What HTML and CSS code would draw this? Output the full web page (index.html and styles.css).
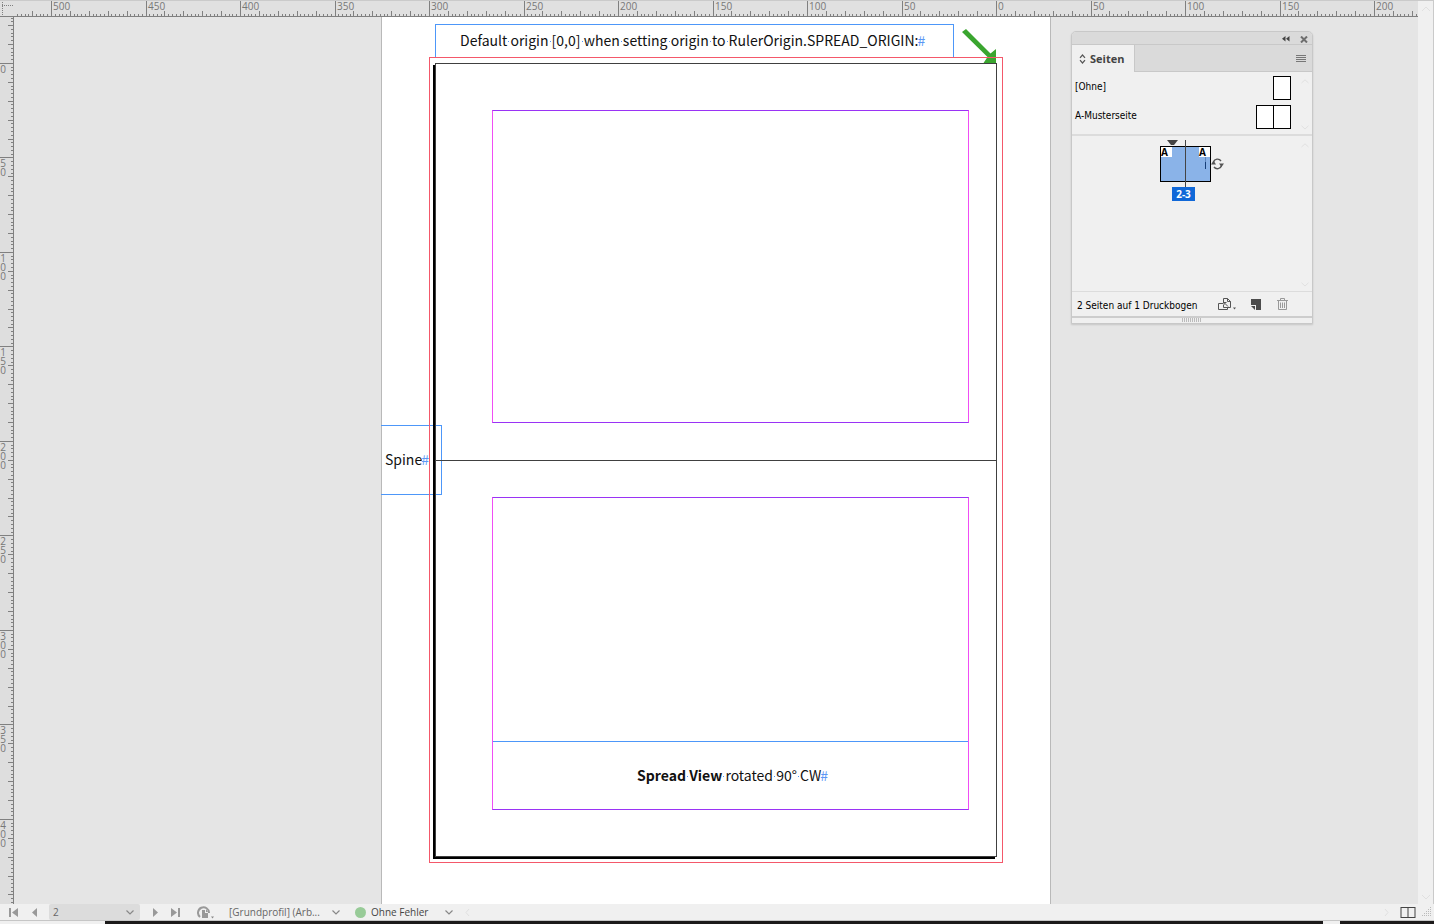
FILE: index.html
```html
<!DOCTYPE html>
<html lang="de">
<head>
<meta charset="utf-8">
<title>Seiten</title>
<link rel="stylesheet" href="styles.css">
</head>
<body>
<div class="app">
  <div class="ruler-corner">
    <svg width="13" height="16" viewBox="0 0 13 16" shape-rendering="crispEdges"><path d="M2.500 2V16M2 5.500H13" stroke="#808080" stroke-dasharray="1 1" fill="none"/></svg>
  </div>
  <div class="ruler ruler-top" id="ruler-top"></div>
  <div class="ruler ruler-left" id="ruler-left"></div>

  <main class="canvas">
    <div class="pasteboard"></div>
    <div class="text-frame frame-title">
      <p class="story">Default<span class="sp"> </span>origin<span class="sp"> </span>[0,0]<span class="sp"> </span>when<span class="sp"> </span>setting<span class="sp"> </span>origin<span class="sp"> </span>to<span class="sp"> </span>RulerOrigin.SPREAD_ORIGIN:<span class="end">#</span></p>
    </div>
    <div class="text-frame frame-spine">
      <p class="story">Spine<span class="end">#</span></p>
    </div>
    <svg class="arrow" width="36" height="36" viewBox="0 0 36 36"><path d="M4 0L28.500 24.500L34 20V34H21.500L25.500 28L0 3Z" fill="#3aa52f"/></svg>
    <div class="bleed"></div>
    <div class="spread">
      <section class="page">
        <div class="margins"></div>
      </section>
      <section class="page">
        <div class="margins">
          <div class="frame-caption">
            <p class="story"><b>Spread<span class="sp"> </span>View</b><span class="sp"> </span>rotated<span class="sp"> </span>90°<span class="sp"> </span>CW<span class="end">#</span></p>
          </div>
        </div>
      </section>
    </div>

    <aside class="panel" aria-label="Seiten">
      <header class="panel-title">
        <button class="icon-btn" aria-label="Minimieren"><svg width="8" height="6" viewBox="0 0 8 6"><path d="M3.500 0V5.500L0 2.800ZM7.500 0V5.500L4 2.800Z" fill="#444"/></svg></button>
        <button class="icon-btn" aria-label="Schließen"><svg width="8" height="7" viewBox="0 0 8 7"><path d="M1 .5L7 6.500M7 .5L1 6.500" stroke="#6e6e6e" stroke-width="2"/></svg></button>
      </header>
      <div class="tabs">
        <button class="tab"><svg width="7" height="10" viewBox="0 0 7 10"><path d="M1 3.800L3.500 1L6 3.800M1 6.200L3.500 9L6 6.200" fill="none" stroke="#555" stroke-width="1.200"/></svg>Seiten</button>
        <button class="icon-btn" aria-label="Menü"><svg width="10" height="8" viewBox="0 0 10 8" shape-rendering="crispEdges"><path d="M0 .5H10M0 2.500H10M0 4.500H10M0 6.500H10" stroke="#777"/></svg></button>
      </div>
      <div class="masters">
        <div class="master"><span class="master-name">[Ohne]</span><span class="sheets"><i></i></span></div>
        <div class="master"><span class="master-name">A-Musterseite</span><span class="sheets"><i></i><i></i></span></div>
        <svg class="hint hint-top" width="8" height="5" viewBox="0 0 8 5"><path d="M.5 4L4 .8L7.500 4"/></svg>
        <svg class="hint hint-bottom" width="8" height="5" viewBox="0 0 8 5"><path d="M.5 .8L4 4L7.500 .8"/></svg>
      </div>
      <div class="pages">
        <button class="thumb" aria-label="Druckbogen 2-3">
          <span class="half">A</span><span class="half right">A</span>
          <svg class="thumb-marks" width="66" height="48" viewBox="0 0 66 48">
            <path d="M7 0H18L14 5H11Z" fill="#444"/>
            <path d="M25.500 0V47" stroke="#444" shape-rendering="crispEdges"/>
            <path d="M45.500 17V29" stroke="#5d86bd" shape-rendering="crispEdges"/><path d="M45.500 22V29" stroke="#173f78" shape-rendering="crispEdges"/>
            <path d="M53.500 22A4.200 4.200 0 0 1 61 21M61.500 25.500A4.200 4.200 0 0 1 54 27" fill="none" stroke="#555" stroke-width="1.400"/>
            <path d="M51 24.500L53.500 20.500L56 24.500ZM59 23.500H64L61.500 27Z" fill="#555"/>
          </svg>
        </button>
        <span class="badge">2-3</span>
        <svg class="hint hint-top" width="8" height="5" viewBox="0 0 8 5"><path d="M.5 4L4 .8L7.500 4"/></svg>
        <svg class="hint hint-bottom" width="8" height="5" viewBox="0 0 8 5"><path d="M.5 .8L4 4L7.500 .8"/></svg>
      </div>
      <footer class="panel-foot">
        <span class="count">2 Seiten auf 1 Druckbogen</span>
        <button class="icon-btn" aria-label="Seitenformat bearbeiten"><svg width="19" height="12" viewBox="0 0 19 12"><path d="M5 5.500H.5V11.500H9.500V9.500M5.500 5V.5H9.500L12.500 3.500V9.500H5.500V7M9.500 .5V3.500H12.500M6 4.500L10 8.500M6 7V4.500H8.500" fill="none" stroke="#555"/><path d="M15 9.500H18L16.500 11.500Z" fill="#555"/></svg></button>
        <button class="icon-btn" aria-label="Neue Seite"><svg width="12" height="11" viewBox="0 0 12 11"><path d="M0 0H10V11H5V6H0Z" fill="#4c4c4c"/><path d="M0 7H4V11Z" fill="#4c4c4c"/></svg></button>
        <button class="icon-btn" aria-label="Löschen"><svg width="11" height="12" viewBox="0 0 11 12"><path d="M0 2.500H11M3.500 2V.5H7.500V2M1.500 3V11.500H9.500V3M3.500 4.500V10M5.500 4.500V10M7.500 4.500V10" fill="none" stroke="#999"/></svg></button>
      </footer>
      <div class="panel-grip"></div>
    </aside>
  </main>

  <div class="scrollbar">
    <svg class="faint" width="10" height="6" viewBox="0 0 10 6"><path d="M1 5L5 1L9 5"/></svg>
    <svg class="faint" width="10" height="6" viewBox="0 0 10 6"><path d="M1 1L5 5L9 1"/></svg>
  </div>

  <footer class="status">
    <button class="icon-btn first" aria-label="Erste Seite"><svg width="10" height="9" viewBox="0 0 10 9"><path d="M0 0H2V9H0ZM9 0V9L3 4.500Z" fill="#999"/></svg></button>
    <button class="icon-btn prev" aria-label="Vorherige Seite"><svg width="6" height="9" viewBox="0 0 6 9"><path d="M5 0V9L0 4.500Z" fill="#999"/></svg></button>
    <label class="drop drop-page"><select aria-label="Seite"><option>2</option></select><svg width="8" height="5" viewBox="0 0 8 5"><path d="M.5 .5L4 4L7.500 .5"/></svg></label>
    <button class="icon-btn next" aria-label="Nächste Seite"><svg width="6" height="9" viewBox="0 0 6 9"><path d="M1 0V9L6 4.500Z" fill="#999"/></svg></button>
    <button class="icon-btn last" aria-label="Letzte Seite"><svg width="10" height="9" viewBox="0 0 10 9"><path d="M7 0H9V9H7ZM0 0V9L6 4.500Z" fill="#999"/></svg></button>
    <button class="icon-btn open" aria-label="Öffnen"><svg width="17" height="13" viewBox="0 0 17 13"><path d="M3 11A5.500 5.500 0 1 1 12 7" fill="none" stroke="#999" stroke-width="2"/><path d="M5 4H8V7H11V12H5Z" fill="#999"/><path d="M9 3L11 6H9Z" fill="#999"/><path d="M14 10.500H17L15.500 12.500Z" fill="#888"/></svg></button>
    <label class="drop drop-profile"><select aria-label="Profil"><option>[Grundprofil] (Arb...</option></select><svg width="8" height="5" viewBox="0 0 8 5"><path d="M.5 .5L4 4L7.500 .5"/></svg></label>
    <span class="dot"></span>
    <label class="drop drop-errors"><select aria-label="Preflight"><option>Ohne Fehler</option></select><svg width="8" height="5" viewBox="0 0 8 5"><path d="M.5 .5L4 4L7.500 .5"/></svg></label>
    <svg class="faint" width="5" height="9" viewBox="0 0 5 9"><path d="M4 1L1 4.500L4 8"/></svg>
    <span class="spacer"></span>
    <svg class="faint" width="5" height="9" viewBox="0 0 5 9"><path d="M1 1L4 4.500L1 8"/></svg>
    <button class="icon-btn split" aria-label="Layoutansicht teilen"><svg width="16" height="11" viewBox="0 0 16 11" shape-rendering="crispEdges"><path d="M1 0V11M15 0V11M8 0V11" stroke="#999" stroke-width="2"/><path d="M1 .5H15M1 10.500H15" stroke="#444"/></svg></button>
    <svg class="size-grip" width="10" height="10" viewBox="0 0 10 10" shape-rendering="crispEdges"><path d="M8.500 0V10M6.500 2V10M4.500 4V10M2.500 6V10M.5 8V10" stroke="#bbb" stroke-dasharray="1 1"/></svg>
  </footer>
  <div class="taskbar"></div>
</div>
<script src="rulers.js"></script>
</body>
</html>
```
FILE: styles.css
```css
* { box-sizing: border-box; }

body {
  margin: 0;
  font-family: "Open Sans", "Noto Sans", sans-serif;
  font-size: 10px;
  color: #111;
}

button, select {
  margin: 0;
  padding: 0;
  border: 0;
  background: none;
  font: inherit;
  color: inherit;
}

svg { display: block; flex: none; }

.app {
  display: grid;
  grid-template: 17px minmax(0, 1fr) 17px 3px / 14px minmax(0, 1fr) 16px;
  height: 100vh;
  overflow: hidden;
}

/* Rulers */
.ruler-corner, .ruler-top { border-bottom: 1px solid #808080; background: #e0e0e0; box-shadow: inset 0 1px #cacaca; }
.ruler-left { border-right: 1px solid #808080; background: #dedede; }
.ruler { position: relative; overflow: hidden; color: #777; font-size: 10px; line-height: 9px; }
.ruler svg { position: absolute; inset: 0; width: 100%; height: 100%; }
.ruler path { stroke: #808080; fill: none; }
.ruler span { position: absolute; }
.ruler-top span { top: 2px; }
.ruler-left span { left: 0; width: 6px; text-align: center; word-break: break-all; }

/* Canvas */
.canvas { position: relative; overflow: hidden; background: #e5e5e5; }
.pasteboard {
  position: absolute; left: 367px; top: 0; bottom: 0; width: 670px;
  background: #fff; border: solid #b9b9b9; border-width: 0 1px;
}
.text-frame {
  position: absolute; display: flex; align-items: center;
  padding-bottom: 2px; border: 1px solid #4d97f9;
}
.frame-title { left: 421px; top: 7px; width: 519px; height: 34px; padding: 0 0 3px 24px; border-bottom: 0; }
.frame-spine { left: 367px; top: 408px; width: 61px; height: 70px; padding-left: 4px; border-left: 0; }
.bleed { position: absolute; left: 415px; top: 40px; width: 574px; height: 806px; border: 1px solid #f4586a; }
.arrow { position: absolute; left: 948px; top: 12px; }
.spread {
  position: absolute; left: 421px; top: 46px; width: 562px; height: 794px;
  display: grid; grid-template-rows: 1fr 1fr;
  border: 1px solid #404040;
  box-shadow: -2px 2px #000;
}
.page { display: flex; padding: 46px 27px 37px 56px; }
.page + .page { border-top: 1px solid #404040; padding: 36px 27px 46px 56px; }
.margins {
  flex: 1; display: flex; flex-direction: column; justify-content: flex-end;
  border: 1px solid; border-color: #9a33f5 #f04df5;
}
.frame-caption {
  display: flex; align-items: center; justify-content: center;
  height: 68px; padding: 0 0 2px 4px; border-top: 1px solid #4d97f9;
}
.story {
  margin: 0; white-space: nowrap; color: #111;
  font: 14px/20px "Noto Sans CJK JP", "Noto Sans", sans-serif;
}
.sp { background: linear-gradient(#4d97f9, #4d97f9) center 60% / 1px 1px no-repeat; }
.end { margin-left: -1px; color: #5b97f5; }

/* Pages panel */
.icon-btn { display: grid; place-items: center; }
.panel {
  position: absolute; left: 1057px; top: 14px; width: 242px;
  background: #f0f0f0; border: 1px solid #c8c8c8;
  border-radius: 5px 5px 0 0; box-shadow: 0 1px 2px #00000022;
  color: #000;
}
.panel-title {
  display: flex; justify-content: flex-end; align-items: center; gap: 10px;
  height: 13px; padding: 2px 4px 0 0;
  background: #dadada; border-bottom: 1px solid #c8c8c8; border-radius: 4px 4px 0 0;
}
.tabs { display: flex; justify-content: space-between; height: 27px; padding-right: 6px; background: #dadada; box-shadow: inset 0 -1px #c8c8c8; }
.tab {
  display: flex; align-items: center; gap: 4px; width: 63px; padding-left: 7px;
  background: #f0f0f0; border-right: 1px solid #c8c8c8;
  font-size: 11px; font-weight: 700; color: #444;
}
.masters, .pages { position: relative; }
.masters { height: 64px; padding: 1px 21px 0 3px; border-bottom: 2px solid #dcdcdc; }
.master { display: flex; justify-content: space-between; align-items: center; height: 29px; }
.master-name, .count { font-family: "DejaVu Sans Condensed", "Open Sans", sans-serif; }
.master-name { padding-bottom: 3px; }
.sheets { display: flex; }
.sheets i { width: 18px; height: 24px; background: #fff; border: 1px solid #000; }
.sheets i + i { margin-left: -1px; }
.hint { position: absolute; right: 3px; }
.hint path, .faint path { fill: none; stroke: #e0e0e0; }
.hint-top { top: 7px; }
.hint-bottom { bottom: 4px; }
.pages { display: flex; flex-direction: column; align-items: flex-start; height: 156px; padding: 10px 0 0 88px; border-bottom: 1px solid #dcdcdc; }
.thumb {
  position: relative; display: flex; justify-content: space-between; align-items: flex-start;
  width: 51px; height: 36px; background: #8ab3e8; border: 1px solid #000;
}
.half { width: 11px; height: 10px; background: #fff; font-size: 10px; line-height: 10px; font-weight: 700; text-align: left; }
.thumb-marks { position: absolute; left: -1px; top: -7px; }
.badge { margin: 5px 0 0 12px; width: 23px; height: 14px; background: #1068d8; color: #fff; font-weight: 700; line-height: 14px; text-align: center; }
.panel-foot { display: flex; align-items: center; gap: 14px; height: 24px; padding: 0 24px 0 5px; }
.count { margin-right: auto; padding-top: 3px; white-space: nowrap; }
.panel-grip {
  height: 7px; border-top: 2px solid #cdcdcd;
  background: repeating-linear-gradient(90deg, #bbb 0 1px, transparent 1px 2px) center 0 / 20px 4px no-repeat;
}

/* Scroll bar and status bar */
.scrollbar {
  grid-area: 1 / 3 / 3 / 4;
  display: flex; flex-direction: column; justify-content: space-between; align-items: center;
  padding: 5px 0 4px; background: #f0f0f0; border-right: 1px solid #cacaca; border-top: 1px solid #cacaca;
}
.status {
  grid-column: 1 / -1; display: flex; align-items: center;
  padding: 0 2px 0 9px; background: #f0f0f0; border-bottom: 1px solid #c6c6c6; color: #444;
}
.first { margin-right: 13px; }
.prev { margin-right: 11px; }
.next { margin-left: 12px; }
.last { margin-left: 13px; }
.open { margin-left: 16px; }
.drop { display: grid; align-items: center; height: 16px; }
.drop select { grid-area: 1 / 1; width: 100%; height: 16px; appearance: none; line-height: 16px; }
.drop svg { grid-area: 1 / 1; justify-self: end; pointer-events: none; }
.drop path { fill: none; stroke: #888; stroke-width: 1.2; }
.drop-page { width: 91px; padding: 0 6px 0 4px; background: #dcdcdc; border-radius: 2px; color: #666; }
.drop-profile { width: 111px; margin-left: 15px; color: #666; }
.dot { width: 11px; height: 11px; margin: 0 5px 0 15px; border-radius: 50%; background: #98cb98; }
.drop-errors { width: 82px; margin-right: 12px; }
.spacer { flex: 1; }
.split { margin: 0 6px 0 11px; }
.taskbar { grid-column: 1 / -1; background: linear-gradient(90deg, #f0f0f0 105px, #1c1a1a 105px calc(100% - 111px), #f0f0f0 calc(100% - 111px) calc(100% - 94px), #1c1a1a calc(100% - 94px)); }
```
FILE: rulers.js
```js
// Millimetre rulers: a tick every 2 mm, a longer one every 10, a labelled one every 50.
const PX_PER_MM = 1.89;
const NS = 'http://www.w3.org/2000/svg';

function drawRuler(el, zero, horizontal) {
  const length = horizontal ? el.clientWidth : el.clientHeight;
  const depth = horizontal ? 16 : 13;
  const first = Math.ceil(-zero / PX_PER_MM / 2) * 2;
  let d = '';
  el.textContent = '';
  for (let mm = first; zero + mm * PX_PER_MM < length; mm += 2) {
    const pos = Math.floor(zero + mm * PX_PER_MM);
    const major = mm % 50 === 0;
    const size = major ? depth : mm % 10 === 0 ? 5 : 2;
    d += horizontal
      ? `M${pos + 0.5} ${depth - size + (major ? 1 : 0)}V${depth}`
      : `M${depth - size} ${pos + 0.5}H${depth}`;
    if (major) {
      const label = document.createElement('span');
      label.textContent = Math.abs(mm);
      label.style[horizontal ? 'left' : 'top'] = `${pos + 2}px`;
      el.append(label);
    }
  }
  const svg = document.createElementNS(NS, 'svg');
  const path = document.createElementNS(NS, 'path');
  path.setAttribute('d', d);
  path.setAttribute('shape-rendering', 'crispEdges');
  svg.append(path);
  el.append(svg);
}

function drawRulers() {
  drawRuler(document.getElementById('ruler-top'), 982.5, true);
  drawRuler(document.getElementById('ruler-left'), 46.4, false);
}

drawRulers();
window.addEventListener('resize', drawRulers);
```
